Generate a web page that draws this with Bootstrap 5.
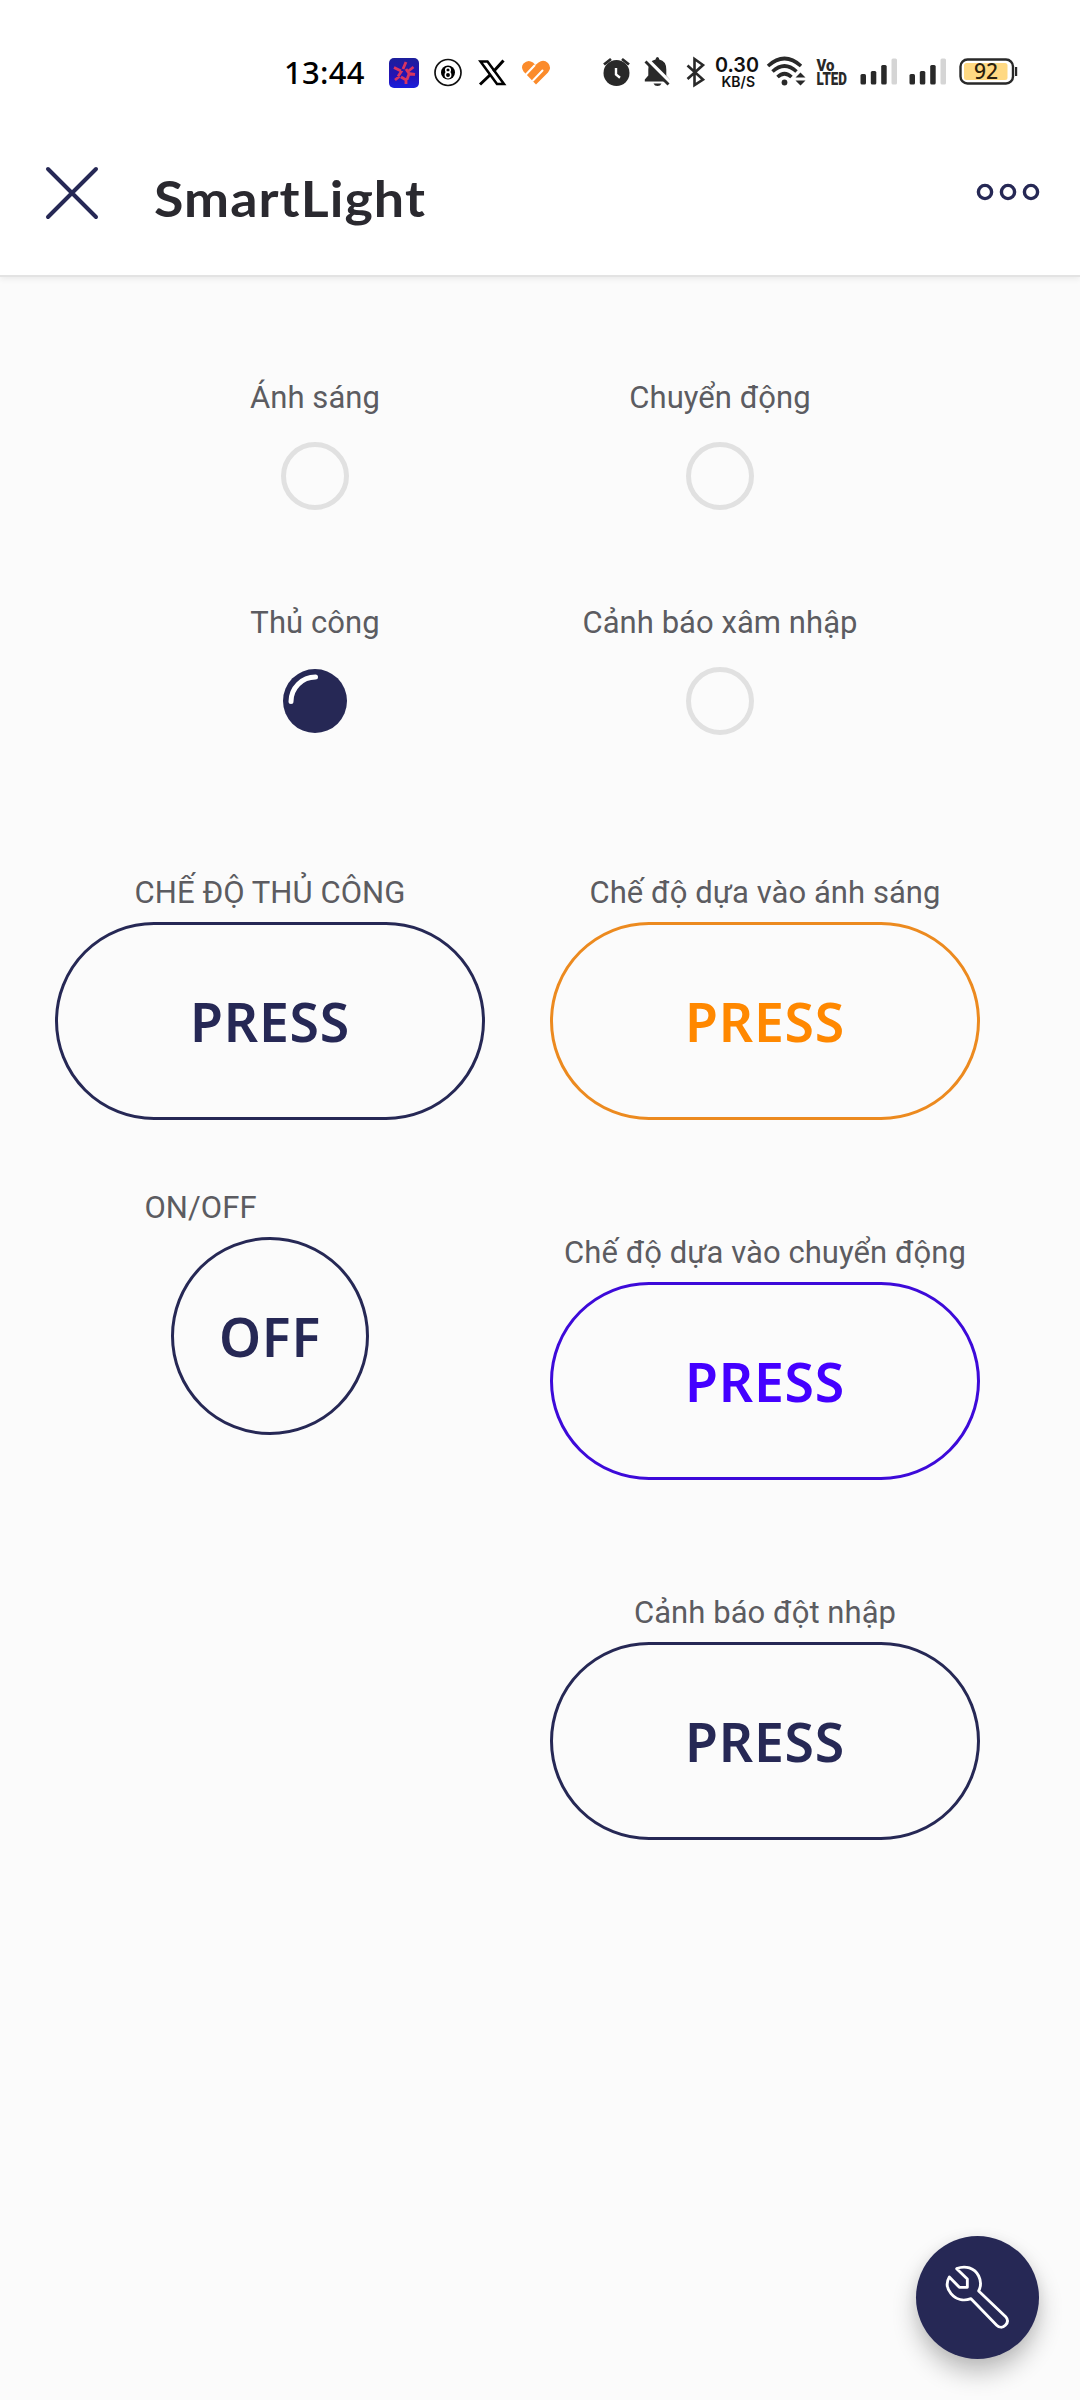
<!DOCTYPE html>
<html lang="vi">
<head>
<meta charset="utf-8">
<meta name="viewport" content="width=device-width, initial-scale=1">
<title>SmartLight</title>
<link href="https://cdn.jsdelivr.net/npm/bootstrap@5.3.0/dist/css/bootstrap.min.css" rel="stylesheet">
<style>
  :root { --navy: #262855; }
  body { background: #fbfbfb; font-family: Roboto, "Liberation Sans", sans-serif; width: 1080px; height: 2400px; overflow: hidden; }
  svg { display: block; flex: none; overflow: visible; }
  .app-header { height: 277px; background: #fff; border-bottom: 2px solid #e3e3e3; box-shadow: 0 2px 6px rgba(0,0,0,.07); }
  .status-bar { height: 144px; padding-left: 284px; }
  .clock { width: 91px; font: 500 31px/42px "Noto Sans", sans-serif; letter-spacing: .3px; color: #000; white-space: nowrap; }
  .title-bar { padding: 0 40px 0 46px; height: 129px; }
  .app-title { font: 700 50px/60px Lato, sans-serif; color: #2a292f; margin: 24px 0 0 56px; white-space: nowrap; letter-spacing: 1px; transform: scaleX(1.075); transform-origin: left; }
  .leds { padding: 103px 157.5px 0 112.5px; }
  .led-cell { width: 405px; height: 225px; }
  .label-text { font-size: 31px; line-height: 36px; letter-spacing: .06px; color: #5c5c61; white-space: nowrap; }
  .led-cell svg { margin-top: 26px; }
  .pads { padding: 45px 90px 0 45px; gap: 45px; }
  .pad-col { width: 450px; }
  .pad-col.right-col { gap: 115px; }
  .pad-col.left-col { gap: 70px; }
  .pad { --c: var(--navy); --b: var(--navy); width: 430px; height: 198px; margin-top: 11px; padding: 2px 0 0; border: 3px solid var(--b); color: var(--c); font: 600 53.5px/72px "Noto Sans", sans-serif; letter-spacing: .8px; }
  .pad.amber { --c: #ff8800; --b: #ec8a1f; }
  .pad.violet { --c: #4400ff; --b: #3d0ad9; }
  .pad.round-pad { width: 198px; }
  .switch-label { padding-right: 139px; }
  .fab { right: 41px; bottom: 41px; width: 123px; height: 123px; background: var(--navy); padding: 0; border: 0; box-shadow: 0 14px 24px rgba(0,0,0,.24), 0 2px 14px rgba(0,0,0,.06); }
</style>
<script src="https://cdn.jsdelivr.net/npm/bootstrap@5.3.0/dist/js/bootstrap.bundle.min.js"></script>
</head>
<body class="position-relative">
<header class="app-header">
  <div class="status-bar d-flex align-items-center">
    <span class="clock">13:44</span>
    <!-- notification icons -->
    <svg width="60" height="40" viewBox="375 52 60 40">
      <defs><linearGradient id="g" x1="0" y1="0" x2="0" y2="1"><stop offset="0" stop-color="#1c1f9c"/><stop offset=".6" stop-color="#2512b4"/><stop offset="1" stop-color="#1a1fdd"/></linearGradient></defs>
      <rect x="389" y="58" width="30" height="30" rx="5" fill="url(#g)"/>
      <path d="M406 62l-3 7M394 67.500l7 3.500M402 70.500l-4 6M395 80l5-4M401 77l6 3.500M406 84v-6M407 79.500l2-5.500M415 74.500l-7-1M409 73.500l-3-4.500M413.500 67l-5 4" fill="none" stroke="#d93560" stroke-width="2.800"/>
    </svg>
    <svg width="35" height="40" viewBox="435 52 35 40">
      <circle cx="448" cy="72.500" r="13" fill="#fff" stroke="#111" stroke-width="1.700"/>
      <circle cx="448" cy="72.500" r="7" fill="#000"/>
      <circle cx="448" cy="70" r="2.300" fill="none" stroke="#fff" stroke-width="1.500"/><circle cx="448" cy="75" r="2.700" fill="none" stroke="#fff" stroke-width="1.500"/>
    </svg>
    <svg width="45" height="40" viewBox="470 52 45 40">
      <path d="M480.500 61.500h7l16.500 22.500h-7z" fill="#fff" stroke="#000" stroke-width="2.500"/>
      <path d="M503.500 60.500L493.500 71.500M490 75L480 84.500" stroke="#000" stroke-width="3"/>
    </svg>
    <svg width="75" height="40" viewBox="515 52 75 40">
      <path d="M536 84.500L523.500 71.500Q520.500 67 523.500 63.500Q528 59 533 62.500L535.500 65L538.500 62.500Q543.500 59 548 63Q552 67.500 548 72.500Z" fill="#fb8b2b"/>
      <path d="M526 74.500L534.500 65.500M533 80.500L542.500 70.500" fill="none" stroke="#fff" stroke-width="2" stroke-linecap="round"/>
    </svg>
    <!-- alarm, muted bell, bluetooth -->
    <svg width="46" height="40" viewBox="590 52 46 40">
      <circle cx="616.500" cy="73" r="13" fill="#292929"/>
      <path d="M604 64.500l7-5.500M622 59l7 5.500" stroke="#292929" stroke-width="2.800"/>
      <path d="M616 68v6.500l4 3.200" fill="none" stroke="#fff" stroke-width="2.400"/>
    </svg>
    <svg width="44" height="40" viewBox="636 52 44 40">
      <path d="M657.500 57q1.600 0 1.800 2.500 7 1.500 7 10v6l3.500 4v2h-25v-2l3.500-4v-6q0-8.500 7.200-10 .2-2.500 2-2.500z" fill="#292929"/>
      <path d="M653.500 83.500h8q-1 2.500-4 2.500t-4-2.500z" fill="#292929"/>
      <path d="M646 59L671 84" stroke="#fff" stroke-width="5"/><path d="M645.500 61.500L668.500 84.500" stroke="#292929" stroke-width="2.800"/>
    </svg>
    <svg width="30" height="40" viewBox="680 52 30 40"><path d="M687.500 65.500L703 79.500l-8.500 5.500V59l8.500 6-15.500 14" fill="none" stroke="#292929" stroke-width="2.600"/></svg>
    <!-- network speed -->
    <svg width="55" height="40" viewBox="710 52 55 40" font-family="Inter, sans-serif" font-weight="600" fill="#111">
      <text x="715" y="72" font-size="20.500" textLength="44" lengthAdjust="spacingAndGlyphs">0.30</text>
      <text x="721.500" y="86.500" font-size="14.500" textLength="33.500" lengthAdjust="spacingAndGlyphs">KB/S</text>
    </svg>
    <svg width="47" height="40" viewBox="765 52 47 40">
      <g fill="none" stroke="#292929" stroke-width="3.600"><path d="M768 66q16.500-15 33 0"/><path d="M772.500 71.500q12-11 24 0"/><path d="M777.500 77q7-6.500 14 0"/></g>
      <circle cx="784.500" cy="82.500" r="2.900" fill="#292929"/>
      <path d="M795.500 77.500l5-5 5 5zM795.500 80.500h10l-5 5z" fill="#292929"/>
    </svg>
    <svg width="43" height="40" viewBox="812 52 43 40" font-family="Roboto, sans-serif" font-weight="900" fill="#292929">
      <text x="816.500" y="70.500" font-size="16.500" textLength="18" lengthAdjust="spacingAndGlyphs">Vo</text>
      <text x="816.500" y="84.500" font-size="17.500" textLength="30.500" lengthAdjust="spacingAndGlyphs">LTED</text>
    </svg>
    <svg width="99" height="40" viewBox="855 52 99 40" fill="#292929">
      <rect x="860.500" y="74" width="5.500" height="10.500" rx="1.500"/><rect x="870.800" y="71" width="5.500" height="13.500" rx="1.500"/><rect x="881.200" y="65" width="5.500" height="19.500" rx="1.500"/><rect x="891.500" y="58.500" width="5.500" height="26" rx="1.500" fill="#d5d5d5"/>
      <rect x="909.500" y="74" width="5.500" height="10.500" rx="1.500"/><rect x="919.800" y="71" width="5.500" height="13.500" rx="1.500"/><rect x="930.200" y="65" width="5.500" height="19.500" rx="1.500"/><rect x="940.500" y="58.500" width="5.500" height="26" rx="1.500" fill="#d5d5d5"/>
    </svg>
    <svg width="70" height="40" viewBox="954 52 70 40">
      <rect x="960.500" y="59.500" width="52.500" height="24" rx="7" fill="#fff" stroke="#292929" stroke-width="2.400"/>
      <rect x="964" y="63" width="43.500" height="17" rx="2.500" fill="#ffd983"/><rect x="1015" y="67" width="2.200" height="9" fill="#292929"/>
      <text x="986" y="79" text-anchor="middle" font-family="Noto Sans, sans-serif" font-size="21" font-weight="500" fill="#2a210f">92</text>
    </svg>
  </div>
  <div class="title-bar d-flex align-items-start">
    <svg width="52" height="98" viewBox="46 144 52 98"><path d="M48 169l48 48M96 169l-48 48" stroke="#262855" stroke-width="4" stroke-linecap="round"/></svg>
    <h1 class="app-title">SmartLight</h1>
    <svg class="ms-auto" width="64" height="98" viewBox="976 144 64 98"><g fill="none" stroke="#262855" stroke-width="3.400"><circle cx="985" cy="192" r="6.600"/><circle cx="1008" cy="192" r="6.600"/><circle cx="1031" cy="192" r="6.600"/></g></svg>
  </div>
</header>

<main>
  <section class="leds d-flex flex-wrap">
    <div class="led-cell d-flex flex-column align-items-center"><span class="label-text">Ánh sáng</span>
      <svg width="68" height="68"><circle cx="34" cy="34" r="31.500" fill="none" stroke="#e1e1e1" stroke-width="5"/></svg></div>
    <div class="led-cell d-flex flex-column align-items-center"><span class="label-text">Chuyển động</span>
      <svg width="68" height="68"><circle cx="34" cy="34" r="31.500" fill="none" stroke="#e1e1e1" stroke-width="5"/></svg></div>
    <div class="led-cell d-flex flex-column align-items-center"><span class="label-text">Thủ công</span>
      <svg width="68" height="68"><circle cx="34" cy="34" r="32" fill="#262855"/><path d="M10 34.500A24.500 24.500 0 0 1 34.500 10" fill="none" stroke="#fff" stroke-width="5" stroke-linecap="round"/></svg></div>
    <div class="led-cell d-flex flex-column align-items-center"><span class="label-text">Cảnh báo xâm nhập</span>
      <svg width="68" height="68"><circle cx="34" cy="34" r="31.500" fill="none" stroke="#e1e1e1" stroke-width="5"/></svg></div>
  </section>

  <section class="pads d-flex align-items-start">
    <div class="pad-col left-col d-flex flex-column">
      <div class="d-flex flex-column align-items-center"><span class="label-text">CHẾ ĐỘ THỦ CÔNG</span><button class="pad btn rounded-pill">PRESS</button></div>
      <div class="d-flex flex-column align-items-center"><span class="label-text switch-label">ON/OFF</span><button class="pad round-pad btn rounded-circle">OFF</button></div>
    </div>
    <div class="pad-col right-col d-flex flex-column">
      <div class="d-flex flex-column align-items-center"><span class="label-text">Chế độ dựa vào ánh sáng</span><button class="pad amber btn rounded-pill">PRESS</button></div>
      <div class="d-flex flex-column align-items-center"><span class="label-text">Chế độ dựa vào chuyển động</span><button class="pad violet btn rounded-pill">PRESS</button></div>
      <div class="d-flex flex-column align-items-center"><span class="label-text">Cảnh báo đột nhập</span><button class="pad btn rounded-pill">PRESS</button></div>
    </div>
  </section>
</main>

<button class="fab btn rounded-circle position-absolute" aria-label="Settings">
  <svg width="123" height="123" viewBox="108 108 369 369"><path d="M230 206C256 195 284 204 296 228C304 244 303 259 296 273L377 350C384 358 384 368 376 376C368 384 357 383 350 376L273 296C251 304 228 299 213 281C199 264 199 246 208 231L238 262H262V237Z" fill="none" stroke="#fff" stroke-width="8.500" stroke-linejoin="round"/></svg>
</button>
</body>
</html>
